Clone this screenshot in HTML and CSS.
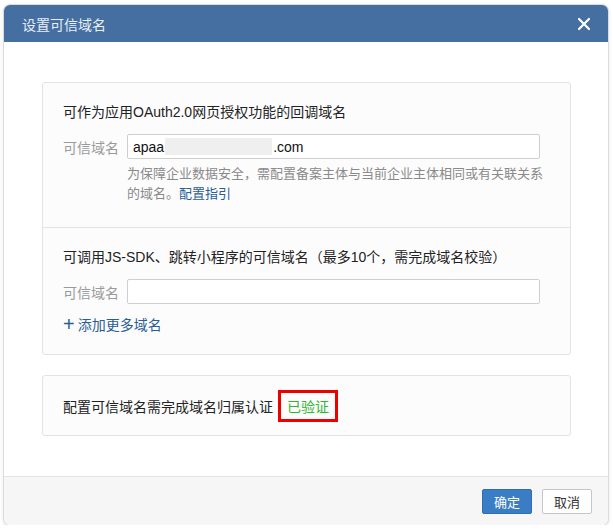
FILE: index.html
```html
<!DOCTYPE html>
<html lang="zh-CN">
<head>
  <meta charset="UTF-8" />
  <title>设置可信域名</title>
  <link rel="stylesheet" href="styles.css">
</head>
<body>
  <div class="dialog">
    <div class="dialog-head">
      <span class="dialog-title">设置可信域名</span>
      <span class="dialog-close">
        <svg width="14" height="14" viewBox="0 0 14 14"><path d="M2 2L12 12M12 2L2 12" stroke="#fff" stroke-width="2.2" stroke-linecap="round"/></svg>
      </span>
    </div>

    <div class="dialog-body">
      <div class="card">
        <div class="section">
          <div class="section-title">可作为应用OAuth2.0网页授权功能的回调域名</div>
          <div class="field">
            <span class="field-label">可信域名</span>
            <div class="input">apaa<span class="blur"></span>.com</div>
          </div>
          <div class="tip">为保障企业数据安全，需配置备案主体与当前企业主体相同或有关联关系的域名。<a class="link">配置指引</a></div>
        </div>
        <div class="section">
          <div class="section-title">可调用JS-SDK、跳转小程序的可信域名（最多10个，需完成域名校验）</div>
          <div class="field">
            <span class="field-label">可信域名</span>
            <div class="input"></div>
          </div>
          <a class="add-more"><span class="plus">+</span>添加更多域名</a>
        </div>
      </div>

      <div class="card verify">
        <span>配置可信域名需完成域名归属认证</span>
        <span class="verified">已验证</span>
      </div>
    </div>

    <div class="dialog-foot">
      <button class="btn btn-primary">确定</button>
      <button class="btn">取消</button>
    </div>
  </div>
</body>
</html>
```

FILE: styles.css
```css
* {
  box-sizing: border-box;
}

body {
  margin: 0;
  padding: 5px 5px 0 4px;
  background: #fff;
  font-family: "Liberation Sans", "Noto Sans CJK SC", sans-serif;
  font-size: 14px;
  color: #333;
}

.dialog {
  width: 604px;
  height: 520px;
  border-radius: 6px;
  overflow: hidden;
  box-shadow: 0 0 0 1px #dcdcdc, 0 1px 4px rgba(0, 0, 0, 0.15);
  display: flex;
  flex-direction: column;
  background: #fff;
}

.dialog-head {
  height: 37px;
  flex-shrink: 0;
  background: #456fa1;
  display: flex;
  align-items: center;
  justify-content: space-between;
  padding: 0 17px 0 18px;
}

.dialog-title {
  color: #e8eef6;
  font-size: 14px;
}

.dialog-close {
  display: flex;
}

.dialog-body {
  flex: 1;
  padding: 40px 37px 0 38px;
}

.card {
  border: 1px solid #e3e3e3;
  border-radius: 3px;
  background: #fcfcfd;
}

.section {
  height: 144px;
  padding: 19px 30px 0 20px;
}

.section + .section {
  border-top: 1px solid #e3e3e3;
  height: 127px;
}

.section-title {
  font-size: 14px;
  line-height: 20px;
  color: #222;
  margin-bottom: 12px;
}

.field {
  display: flex;
  align-items: center;
}

.field-label {
  width: 64px;
  color: #9a9a9a;
  font-size: 14px;
}

.input {
  flex: 1;
  height: 25px;
  border: 1px solid #cfcfcf;
  border-radius: 2px;
  background: #fff;
  display: flex;
  align-items: center;
  padding-left: 5px;
  font-size: 14px;
  color: #111;
}

.blur {
  display: inline-block;
  width: 107px;
  height: 17px;
  background: #efefef;
  margin: 0 1px;
}

.tip {
  margin: 5px -4px 0 64px;
  font-size: 13px;
  line-height: 20px;
  color: #8a8a8a;
}

.link,
.add-more {
  color: #2a5c96;
}

.add-more {
  display: inline-flex;
  align-items: center;
  margin-top: 10px;
  font-size: 14px;
}

.plus {
  font-size: 20px;
  line-height: 14px;
  margin-right: 3px;
  font-weight: 300;
}

.verify {
  margin-top: 20px;
  height: 61px;
  display: flex;
  align-items: center;
  padding-left: 20px;
  color: #222;
}

.verified {
  margin-left: 5px;
  border: 3px solid #ef0000;
  padding: 3px 6px;
  color: #2fb82f;
}

.dialog-foot {
  height: 49px;
  flex-shrink: 0;
  border-top: 1px solid #e1e4e8;
  background: #f6f6f6;
  display: flex;
  align-items: center;
  justify-content: flex-end;
  gap: 10px;
  padding-right: 16px;
}

.btn {
  width: 50px;
  height: 25px;
  border: 1px solid #c6c6c6;
  border-radius: 2px;
  background: #fff;
  font-family: inherit;
  font-size: 13px;
  color: #333;
  padding: 0;
}

.btn-primary {
  background: #3a7dc4;
  border-color: #2e6eb2;
  color: #fff;
}
```
